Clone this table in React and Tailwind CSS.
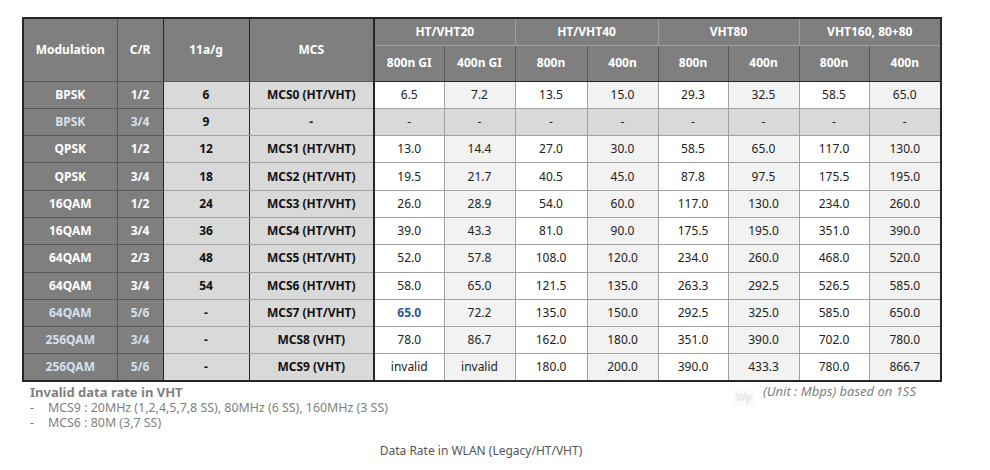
import React from "react";

const rows = [
  { mod: "BPSK", cr: "1/2", ag: "6", mcs: "MCS0 (HT/VHT)", v: ["6.5", "7.2", "13.5", "15.0", "29.3", "32.5", "58.5", "65.0"], light: false },
  { mod: "BPSK", cr: "3/4", ag: "9", mcs: "-", v: ["-", "-", "-", "-", "-", "-", "-", "-"], light: true, dash: true },
  { mod: "QPSK", cr: "1/2", ag: "12", mcs: "MCS1 (HT/VHT)", v: ["13.0", "14.4", "27.0", "30.0", "58.5", "65.0", "117.0", "130.0"] },
  { mod: "QPSK", cr: "3/4", ag: "18", mcs: "MCS2 (HT/VHT)", v: ["19.5", "21.7", "40.5", "45.0", "87.8", "97.5", "175.5", "195.0"] },
  { mod: "16QAM", cr: "1/2", ag: "24", mcs: "MCS3 (HT/VHT)", v: ["26.0", "28.9", "54.0", "60.0", "117.0", "130.0", "234.0", "260.0"] },
  { mod: "16QAM", cr: "3/4", ag: "36", mcs: "MCS4 (HT/VHT)", v: ["39.0", "43.3", "81.0", "90.0", "175.5", "195.0", "351.0", "390.0"] },
  { mod: "64QAM", cr: "2/3", ag: "48", mcs: "MCS5 (HT/VHT)", v: ["52.0", "57.8", "108.0", "120.0", "234.0", "260.0", "468.0", "520.0"] },
  { mod: "64QAM", cr: "3/4", ag: "54", mcs: "MCS6 (HT/VHT)", v: ["58.0", "65.0", "121.5", "135.0", "263.3", "292.5", "526.5", "585.0"] },
  { mod: "64QAM", cr: "5/6", ag: "-", mcs: "MCS7 (HT/VHT)", v: ["65.0", "72.2", "135.0", "150.0", "292.5", "325.0", "585.0", "650.0"], light: true, blue: true },
  { mod: "256QAM", cr: "3/4", ag: "-", mcs: "MCS8 (VHT)", v: ["78.0", "86.7", "162.0", "180.0", "351.0", "390.0", "702.0", "780.0"], light: true },
  { mod: "256QAM", cr: "5/6", ag: "-", mcs: "MCS9 (VHT)", v: ["invalid", "invalid", "180.0", "200.0", "390.0", "433.3", "780.0", "866.7"], light: true },
];

const widths = [94, 46, 86, 125, 70, 71, 72, 71, 70, 71, 70, 72];

export default function App() {
  const font = { fontFamily: '"Noto Sans", "Open Sans", sans-serif' };
  return (
    <div className="w-[990px] h-[470px] bg-white" style={font}>
      <div className="pt-[17px] pl-[22px] w-[940px]">
        <table className="table-fixed border-collapse w-[918px] border-2 border-[#262626] text-[12px] leading-none">
          <colgroup>
            {widths.map((w, i) => (
              <col key={i} style={{ width: w }} />
            ))}
          </colgroup>
          <thead>
            <tr className="h-[27px] bg-[#7f7f7f] text-white font-bold">
              <th rowSpan={2} className="border border-[#595959] font-bold">Modulation</th>
              <th rowSpan={2} className="border border-[#595959] border-r-[#262626] font-bold">C/R</th>
              <th rowSpan={2} className="border border-[#595959] border-x-[#262626] font-bold">11a/g</th>
              <th rowSpan={2} className="border border-[#595959] border-l-[#262626] border-r-2 border-r-[#262626] font-bold">MCS</th>
              <th colSpan={2} className="border border-[#a0a0a0] border-l-[#262626] font-bold">HT/VHT20</th>
              <th colSpan={2} className="border border-[#a0a0a0] font-bold">HT/VHT40</th>
              <th colSpan={2} className="border border-[#a0a0a0] font-bold">VHT80</th>
              <th colSpan={2} className="border border-[#a0a0a0] font-bold">VHT160, 80+80</th>
            </tr>
            <tr className="h-[36px] bg-[#7f7f7f] text-white font-bold">
              {["800n GI", "400n GI", "800n", "400n", "800n", "400n", "800n", "400n"].map((t, i) => (
                <th key={i} className={`border border-[#595959] border-b-[#262626] font-bold ${i === 0 ? "border-l-[#262626]" : ""}`}>{t}</th>
              ))}
            </tr>
          </thead>
          <tbody>
            {rows.map((r, ri) => (
              <tr key={ri} className="h-[27.3px]">
                <td className={`bg-[#7f7f7f] border border-[#595959] text-center font-bold ${r.light ? "text-[#d6e0ee]" : "text-white"} ${ri === 0 ? "border-t-[#262626]" : ""}`}>{r.mod}</td>
                <td className={`bg-[#7f7f7f] border border-[#595959] border-r-[#262626] text-center font-bold ${r.light ? "text-[#d6e0ee]" : "text-white"} ${ri === 0 ? "border-t-[#262626]" : ""}`}>{r.cr}</td>
                <td className={`bg-[#d9d9d9] border border-[#a0a0a0] border-x-[#262626] text-center font-bold text-[#111] ${ri === 0 ? "border-t-[#262626]" : ""}`}>{r.ag}</td>
                <td className={`bg-[#d9d9d9] border border-[#a0a0a0] border-l-[#262626] border-r-2 border-r-[#262626] text-center font-bold text-[#111] ${ri === 0 ? "border-t-[#262626]" : ""}`}>{r.mcs}</td>
                {r.v.map((val, vi) => {
                  const bg = r.dash ? "bg-[#d9d9d9]" : vi % 2 === 0 ? "bg-white" : "bg-[#f2f2f2]";
                  const blue = r.blue && vi === 0;
                  return (
                    <td
                      key={vi}
                      className={`${bg} border border-[#a0a0a0] text-center ${blue ? "font-bold text-[#2f5597]" : "text-[#222]"} ${ri === 0 ? "border-t-[#262626]" : ""} ${vi === 0 ? "border-l-[#262626]" : ""}`}
                    >
                      {val}
                    </td>
                  );
                })}
              </tr>
            ))}
          </tbody>
        </table>
        <div className="flex justify-between w-[918px] text-[#7f7f7f]">
          <div className="pl-[8px] pt-[3px] leading-[15px]">
            <div className="font-bold text-[13px]">Invalid data rate in VHT</div>
            <div className="flex text-[12.4px]"><span className="w-[18px]">-</span><span>MCS9 : 20MHz (1,2,4,5,7,8 SS), 80MHz (6 SS), 160MHz (3 SS)</span></div>
            <div className="flex text-[12.4px]"><span className="w-[18px]">-</span><span>MCS6 : 80M (3,7 SS)</span></div>
          </div>
          <div className="flex items-start pt-[1px] pr-[24px] text-[13px] leading-[16px]">
            <div className="w-[20px] h-[20px] mt-[4px] mr-[9px] rounded-sm bg-[#fafafa] text-[#e6e6e6] text-[10px] font-bold flex items-center justify-center">Wp</div>
            <div className="italic">(Unit : Mbps) based on 1SS</div>
          </div>
        </div>
        <div className="w-[918px] text-center text-[12px] text-[#555] mt-[12px]">Data Rate in WLAN (Legacy/HT/VHT)</div>
      </div>
    </div>
  );
}
